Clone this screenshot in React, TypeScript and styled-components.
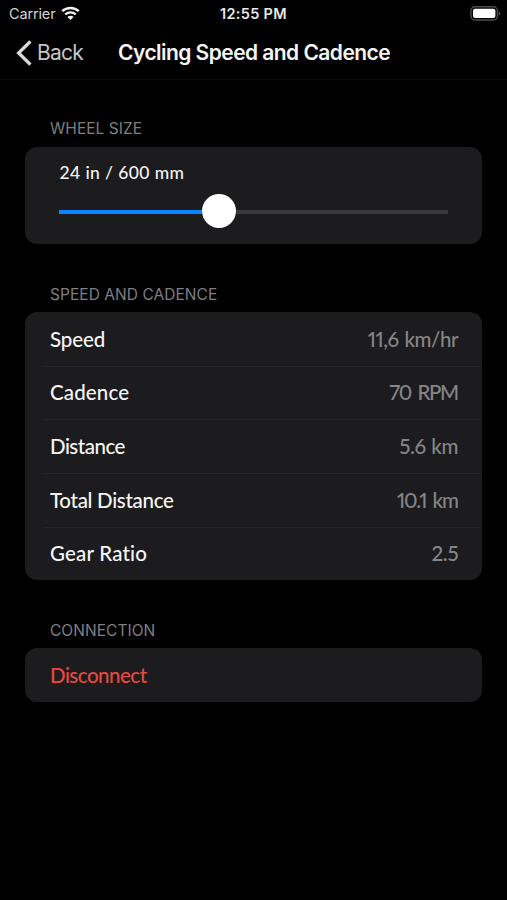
import React from 'react';
import styled, { createGlobalStyle } from 'styled-components';

const GlobalStyle = createGlobalStyle`
  * { box-sizing: border-box; }
  html, body { margin: 0; padding: 0; background: #000; }
  body { font-family: Inter, 'Liberation Sans', sans-serif; color: #fff; overflow: hidden; }
`;

const Screen = styled.div`
  width: 507px;
  height: 900px;
  background: #000;
  overflow: hidden;
`;

const StatusBar = styled.div`
  display: grid;
  grid-template-columns: 1fr auto 1fr;
  align-items: center;
  height: 27px;
  padding: 0 6px 0 9px;
  font-size: 14.5px;
  line-height: 27px;
`;

const Carrier = styled.div`
  display: flex;
  align-items: center;
  gap: 6px;
  color: #d2d2d2;
  letter-spacing: -0.15px;
`;

const Clock = styled.div`
  margin-left: -3px;
  font-weight: 600;
  font-size: 14.5px;
  letter-spacing: 0.3px;
  color: #e8e8e8;
`;

const BatterySlot = styled.div`
  display: flex;
  justify-content: flex-end;
`;

const NavBar = styled.header`
  display: flex;
  align-items: center;
  height: 53px;
  padding-left: 16px;
  border-bottom: 1px solid #0b0b0b;
`;

const BackButton = styled.button`
  display: flex;
  align-items: center;
  gap: 5px;
  width: 102px;
  padding: 0;
  border: 0;
  background: none;
  font: 400 21px/26px Inter, sans-serif;
  letter-spacing: -0.75px;
  color: #c6c6c6;
`;

const Title = styled.h1`
  margin: 0;
  font: 600 21px/26px Inter, sans-serif;
  letter-spacing: -0.55px;
  white-space: nowrap;
  color: #f6f6f6;
`;

const Section = styled.section<{ $gap: number }>`
  padding: ${p => p.$gap}px 24.6px 0 25.4px;
`;

const SectionTitle = styled.h2<{ $height?: number }>`
  margin: 0;
  padding-left: 24.6px;
  height: ${p => p.$height ?? 26}px;
  font: 400 15.5px/18px Inter, sans-serif;
  letter-spacing: 0.05px;
  color: #7f7f82;
`;

const Card = styled.div`
  overflow: hidden;
  border-radius: 12px;
  background: #1c1c1e;
`;

const SliderCard = styled(Card)`
  height: 97px;
  padding: 14px 34.4px 0 34.1px;
`;

const SliderLabel = styled.div`
  font: 500 17.5px/24px Lato, sans-serif;
  letter-spacing: 0.4px;
  color: #f4f4f4;
`;

const Slider = styled.div`
  display: flex;
  align-items: center;
  height: 34px;
  margin-top: 9px;
`;

const TrackFill = styled.div`
  flex: 0 0 142.5px;
  height: 4px;
  margin-top: 2px;
  background: #0d84ff;
`;

const Knob = styled.div`
  flex: 0 0 34px;
  height: 34px;
  border-radius: 50%;
  background: #fff;
`;

const TrackRest = styled.div`
  flex: 1;
  height: 4px;
  margin-top: 2px;
  background: #3b3b3d;
`;

const Row = styled.div<{ $divided?: boolean }>`
  display: flex;
  justify-content: space-between;
  align-items: center;
  height: 53.7px;
  margin-left: 18.6px;
  padding: 0 24px 1.6px 6px;
  border-top: 1px solid ${p => (p.$divided ? '#262628' : 'transparent')};
`;

const RowLabel = styled.span<{ $spacing?: number; $danger?: boolean }>`
  font: 500 20.5px/26px Lato, sans-serif;
  font-variant-ligatures: none;
  letter-spacing: ${p => p.$spacing ?? 0}px;
  color: ${p => (p.$danger ? '#e94a40' : '#f6f6f6')};
`;

const RowValue = styled.span<{ $spacing?: number }>`
  font: 500 20.5px/26px Lato, sans-serif;
  font-feature-settings: 'pnum' 1;
  letter-spacing: ${p => p.$spacing ?? 0}px;
  word-spacing: ${p => -(p.$spacing ?? 0) * 2}px;
  margin-right: ${p => -(p.$spacing ?? 0) / 2}px;
  color: #858588;
`;

const WifiIcon = () => (
  <svg width="19" height="15" viewBox="0 0 19 15" fill="none" stroke="#f2f2f2">
    <path d="M1.2 5.2C5.8 .9 13.2 .9 17.8 5.2" strokeWidth="2.4" />
    <path d="M4.3 8.3C7.2 5.7 11.8 5.7 14.7 8.3" strokeWidth="2.3" />
    <path d="M9.5 14 6.4 10.9C8.2 9.4 10.8 9.4 12.6 10.9Z" fill="#f2f2f2" stroke="none" />
  </svg>
);

const BatteryIcon = () => (
  <svg width="31" height="15" viewBox="0 0 31 15">
    <rect x="1" y=".8" width="26.4" height="13.2" rx="4" fill="none" stroke="#4d4d4d" strokeWidth="1.4" />
    <rect x="3" y="2.8" width="22.4" height="9.2" rx="2" fill="#fff" />
    <path d="M28.8 5.2C30.9 6 30.9 8.8 28.8 9.6Z" fill="#555" />
  </svg>
);

const BackIcon = () => (
  <svg width="16" height="26" viewBox="0 0 16 26" fill="none" stroke="#d8d8d8" strokeWidth="3.3">
    <path d="M14.4 1.4 2.6 13 14.4 24.6" />
  </svg>
);

const metrics = [
  { label: 'Speed', value: '11,6 km/hr', ls: -0.1, vs: -0.4 },
  { label: 'Cadence', value: '70 RPM', ls: 0.15, vs: -1.4 },
  { label: 'Distance', value: '5.6 km', ls: -0.5, vs: -0.3 },
  { label: 'Total Distance', value: '10.1 km', ls: -0.3, vs: -1.1 },
  { label: 'Gear Ratio', value: '2.5', ls: 0.2, vs: -0.3 },
];

export default function App() {
  return (
    <>
      <GlobalStyle />
      <Screen>
        <StatusBar>
          <Carrier>Carrier <WifiIcon /></Carrier>
          <Clock>12:55 PM</Clock>
          <BatterySlot><BatteryIcon /></BatterySlot>
        </StatusBar>
        <NavBar>
          <BackButton><BackIcon />Back</BackButton>
          <Title>Cycling Speed and Cadence</Title>
        </NavBar>
        <Section $gap={40}>
          <SectionTitle $height={27}>WHEEL SIZE</SectionTitle>
          <SliderCard>
            <SliderLabel>24 in / 600 mm</SliderLabel>
            <Slider><TrackFill /><Knob /><TrackRest /></Slider>
          </SliderCard>
        </Section>
        <Section $gap={42}>
          <SectionTitle>SPEED AND CADENCE</SectionTitle>
          <Card>
            {metrics.map((m, i) => (
              <Row key={m.label} $divided={i > 0}>
                <RowLabel $spacing={m.ls}>{m.label}</RowLabel>
                <RowValue $spacing={m.vs}>{m.value}</RowValue>
              </Row>
            ))}
          </Card>
        </Section>
        <Section $gap={42}>
          <SectionTitle>CONNECTION</SectionTitle>
          <Card>
            <Row><RowLabel $danger $spacing={-0.5}>Disconnect</RowLabel></Row>
          </Card>
        </Section>
      </Screen>
    </>
  );
}
